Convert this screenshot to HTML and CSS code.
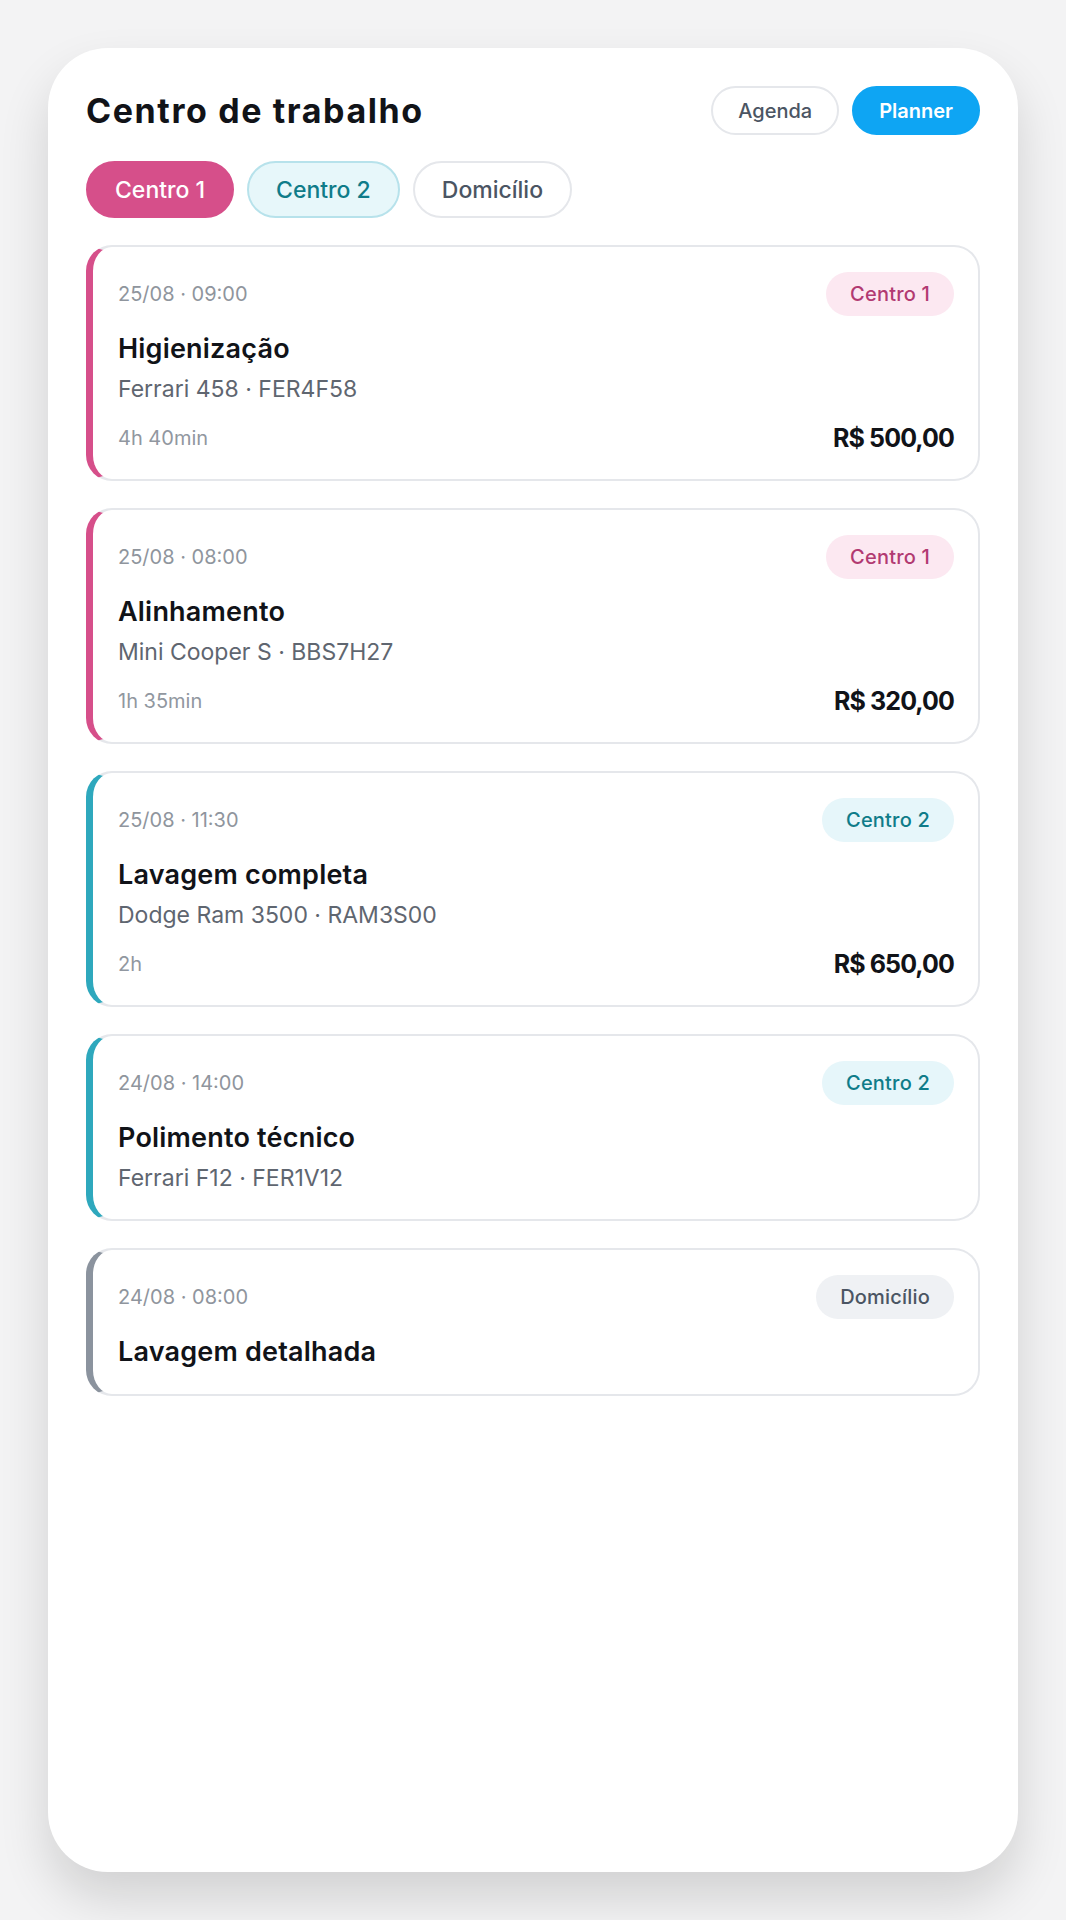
FILE: index.html
```html
<!DOCTYPE html>
<html lang="pt-BR">
<head>
    <meta charset="UTF-8">
    <meta name="viewport" content="width=device-width, initial-scale=1.0">
    <title>Centro de trabalho</title>
    <link rel="stylesheet" href="styles.css">
</head>
<body>
    <div class="phone">
        <div class="top">
            <h1>Centro de trabalho</h1>
            <div class="views">
                <button class="view">Agenda</button>
                <button class="view active">Planner</button>
            </div>
        </div>

        <div class="chips">
            <button class="chip c1">Centro 1</button>
            <button class="chip c2">Centro 2</button>
            <button class="chip home">Domicílio</button>
        </div>

        <div class="list">
            <div class="job c1">
                <div class="job-head">
                    <span class="when">25/08 · 09:00</span>
                    <span class="tag c1">Centro 1</span>
                </div>
                <div class="name">Higienização</div>
                <div class="car">Ferrari 458 · FER4F58</div>
                <div class="job-foot">
                    <span class="dur">4h 40min</span>
                    <span class="price">R$ 500,00</span>
                </div>
            </div>

            <div class="job c1">
                <div class="job-head">
                    <span class="when">25/08 · 08:00</span>
                    <span class="tag c1">Centro 1</span>
                </div>
                <div class="name">Alinhamento</div>
                <div class="car">Mini Cooper S · BBS7H27</div>
                <div class="job-foot">
                    <span class="dur">1h 35min</span>
                    <span class="price">R$ 320,00</span>
                </div>
            </div>

            <div class="job c2">
                <div class="job-head">
                    <span class="when">25/08 · 11:30</span>
                    <span class="tag c2">Centro 2</span>
                </div>
                <div class="name">Lavagem completa</div>
                <div class="car">Dodge Ram 3500 · RAM3S00</div>
                <div class="job-foot">
                    <span class="dur">2h</span>
                    <span class="price">R$ 650,00</span>
                </div>
            </div>

            <div class="job c2">
                <div class="job-head">
                    <span class="when">24/08 · 14:00</span>
                    <span class="tag c2">Centro 2</span>
                </div>
                <div class="name">Polimento técnico</div>
                <div class="car">Ferrari F12 · FER1V12</div>
            </div>

            <div class="job home">
                <div class="job-head">
                    <span class="when">24/08 · 08:00</span>
                    <span class="tag home">Domicílio</span>
                </div>
                <div class="name">Lavagem detalhada</div>
            </div>
        </div>
    </div>
</body>
</html>
```

FILE: styles.css
```css
body { margin: 0; padding: 48px; background: #f3f3f4; font-family: Inter, "Noto Sans", sans-serif; color: #111318; }
.phone { box-sizing: border-box; min-height: 1824px; padding: 38px; background: #fff; border-radius: 60px; box-shadow: 0 26px 50px rgba(0, 0, 0, 0.14); }

.top { display: flex; justify-content: space-between; align-items: center; }
h1 { margin: 0; font-size: 34px; font-weight: 700; letter-spacing: 1.6px; }
.views { display: flex; gap: 13px; }
button { font-family: inherit; cursor: pointer; }
.view { height: 49px; padding: 0 25px; border: 2px solid #e5e7eb; border-radius: 25px; background: #fff; color: #4b5563; font-size: 20px; font-weight: 500; }
.view.active { background: #0ea5f3; border-color: #0ea5f3; color: #fff; font-weight: 600; }

.chips { display: flex; gap: 13px; margin-top: 26px; }
.chip { height: 57px; padding: 0 27px; border: 2px solid #e5e7eb; border-radius: 29px; background: #fff; color: #4b5563; font-size: 23px; font-weight: 500; }
.chip.c1 { background: #d64f8a; border-color: #d64f8a; color: #fff; }
.chip.c2 { background: #e7f7fa; border-color: #b7e2eb; color: #0f7c89; }

.list { display: flex; flex-direction: column; gap: 27px; margin-top: 27px; }
.job { padding: 25px 24px 26px 25px; border: 2px solid #e5e7eb; border-left: 7px solid #8b939e; border-radius: 26px; }
.job.c1 { border-left-color: #d64f8a; }
.job.c2 { border-left-color: #2ea8bd; }
.job-head { display: flex; justify-content: space-between; align-items: center; }
.when { font-size: 20px; color: #8f959d; }
.tag { height: 44px; line-height: 44px; padding: 0 24px; border-radius: 22px; font-size: 20px; font-weight: 500; letter-spacing: 0.2px; }
.tag.c1 { background: #fce8f1; color: #b23a72; }
.tag.c2 { background: #e6f6fa; color: #0f7c89; }
.tag.home { background: #eff1f4; color: #4b5563; }
.name { margin-top: 17px; font-size: 27px; line-height: 32px; font-weight: 600; letter-spacing: 0.2px; }
.car { margin-top: 9px; font-size: 23px; line-height: 30px; color: #5f6670; }
.job-foot { display: flex; justify-content: space-between; align-items: center; margin-top: 19px; }
.dur { font-size: 20px; line-height: 24px; color: #9197a0; }
.price { font-size: 25px; line-height: 30px; font-weight: 700; letter-spacing: -0.9px; }
```
